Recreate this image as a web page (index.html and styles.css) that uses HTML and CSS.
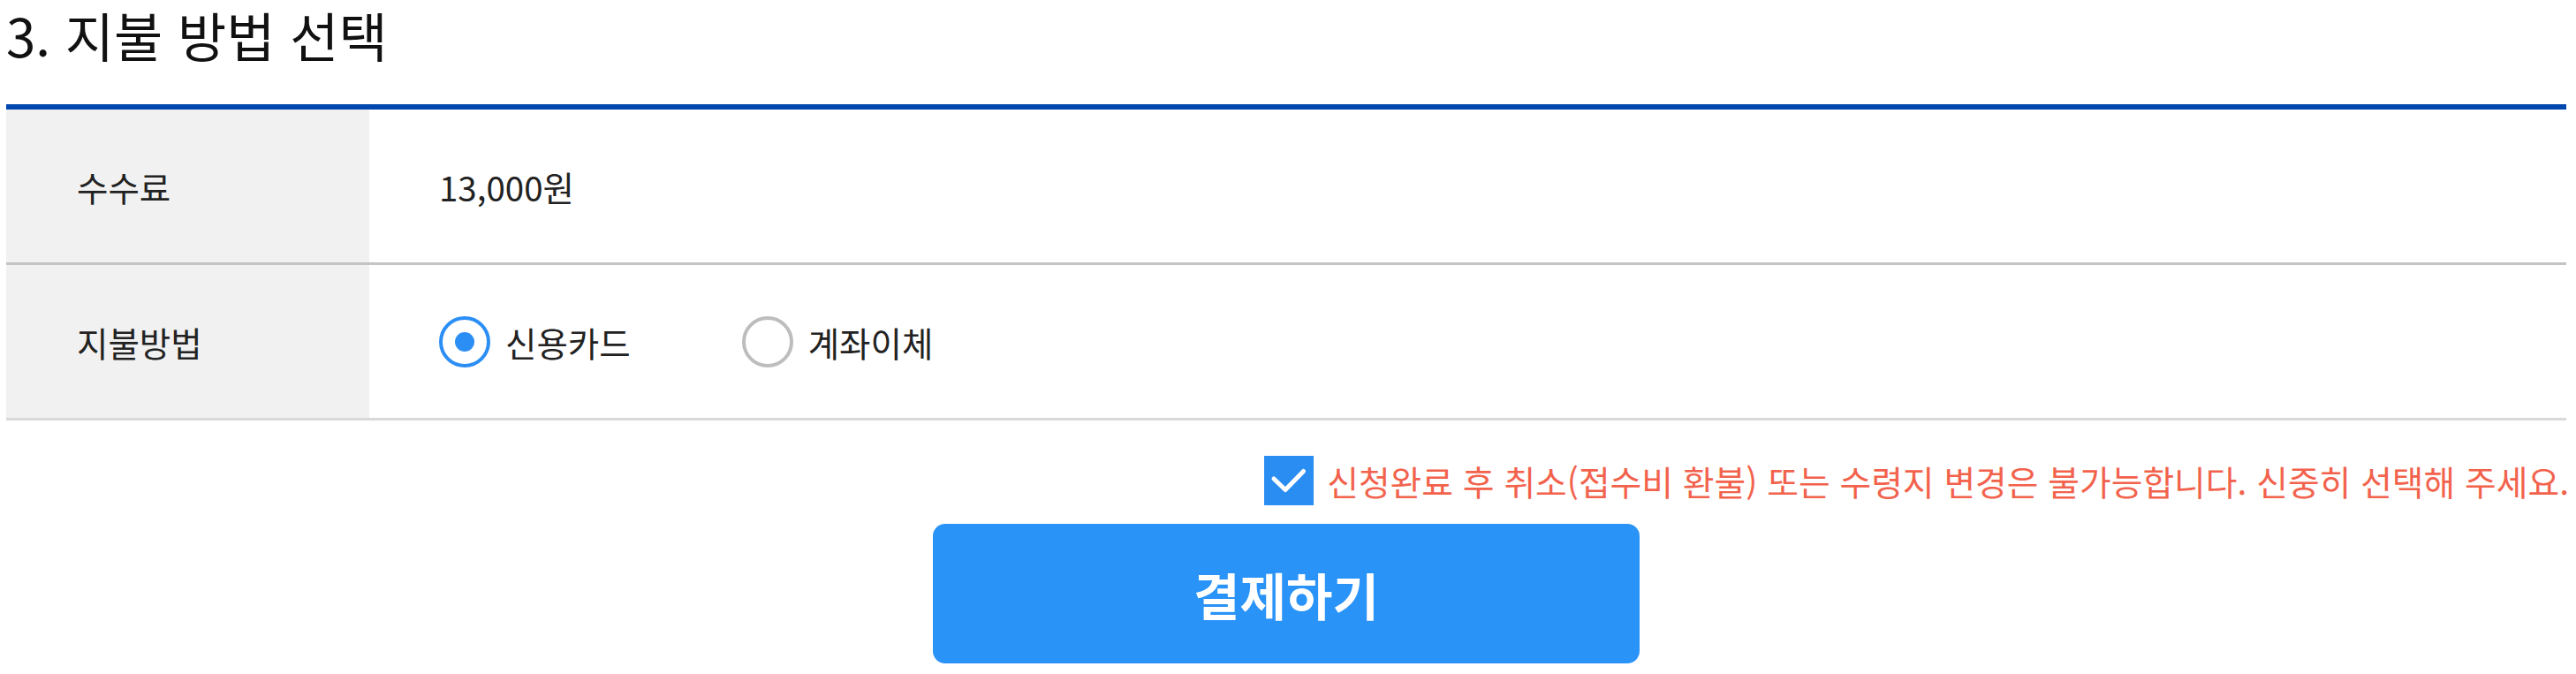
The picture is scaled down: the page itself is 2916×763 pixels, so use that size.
FILE: index.html
```html
<!DOCTYPE html>
<html lang="ko">
    <head>
        <meta charset="utf-8" />
        <title>지불 방법 선택</title>
        <link rel="stylesheet" href="styles.css">
    </head>
    <body>
        <div class="wrap">
            <h2 class="step-title">3. 지불 방법 선택</h2>

            <div class="pay-table">
                <div class="pay-row">
                    <div class="pay-label">수수료</div>
                    <div class="pay-value">13,000원</div>
                </div>
                <div class="pay-row last">
                    <div class="pay-label">지불방법</div>
                    <div class="pay-value">
                        <label class="radio checked"><span class="radio-mark"></span>신용카드</label>
                        <label class="radio"><span class="radio-mark"></span>계좌이체</label>
                    </div>
                </div>
            </div>

            <div class="notice">
                <span class="check-box">
                    <svg width="56" height="56" viewBox="0 0 56 56">
                        <path d="M11 26 L24 38.5 L44.5 17.5" fill="none" stroke="#fff" stroke-width="5" stroke-linecap="round" stroke-linejoin="round"/>
                    </svg>
                </span>
                <span class="notice-text">신청완료 후 취소(접수비 환불) 또는 수령지 변경은 불가능합니다. 신중히 선택해 주세요.</span>
            </div>

            <div class="actions">
                <button class="pay-btn" type="button">결제하기</button>
            </div>
        </div>
    </body>
</html>
```

FILE: styles.css
```css
html {
    margin: 0px;
    padding: 0px;
}
body {
    font-family: 'Noto Sans CJK KR', 'Noto Sans', sans-serif;
    margin: 0px;
    padding: 0px;
    color: #222;
    background-color: #fff;
}
.wrap {
    margin: 0px 11px 0px 7px;
}
.step-title {
    font-size: 60px;
    font-weight: 400;
    line-height: 78px;
    height: 118px;
    margin: 0px;
    padding: 0px;
    color: #111;
}
.pay-table {
    border-top: 6px solid #0047ae;
}
.pay-row {
    display: flex;
    height: 173px;
    border-bottom: 3px solid #c4c4c4;
    font-size: 38.5px;
}
.pay-row.last {
    border-bottom-color: #d9d9d9;
}
.pay-label {
    width: 331px;
    padding-left: 80px;
    background-color: #f1f1f1;
    display: flex;
    align-items: center;
}
.pay-value {
    flex: 1;
    padding-left: 79px;
    display: flex;
    align-items: center;
}
.radio {
    display: flex;
    align-items: center;
    margin-right: 126px;
}
.radio-mark {
    box-sizing: border-box;
    width: 58px;
    height: 58px;
    border-radius: 50%;
    border: 4px solid #bdbdbd;
    margin-right: 17px;
    display: flex;
    align-items: center;
    justify-content: center;
}
.radio.checked .radio-mark {
    border-color: #2b8ef5;
}
.radio.checked .radio-mark::after {
    content: '';
    width: 22px;
    height: 22px;
    border-radius: 50%;
    background-color: #2b8ef5;
}
.notice {
    display: flex;
    justify-content: flex-end;
    align-items: center;
    margin-top: 40px;
}
.check-box {
    width: 56px;
    height: 56px;
    background-color: #2a8df2;
    margin-right: 15px;
}
.check-box svg {
    display: block;
}
.notice-text {
    font-size: 38.8px;
    color: #f2624c;
    margin-right: -3px;
}
.actions {
    display: flex;
    justify-content: center;
    margin-top: 21px;
}
.pay-btn {
    width: 800px;
    height: 158px;
    border: 0px;
    border-radius: 14px;
    background-color: #2a93f7;
    color: #fff;
    font-family: 'Noto Sans CJK KR', 'Noto Sans', sans-serif;
    font-size: 57px;
    font-weight: 700;
}
```
